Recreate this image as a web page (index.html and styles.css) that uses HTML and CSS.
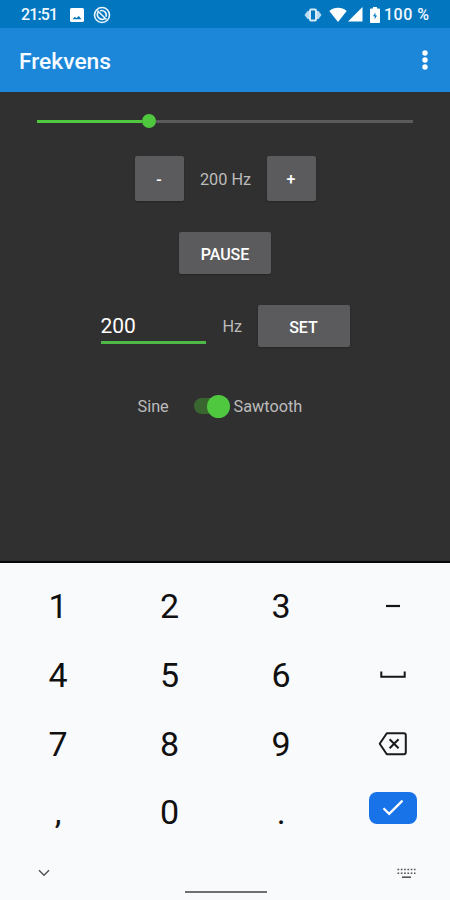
FILE: index.html
```html
<!DOCTYPE html>
<html lang="en">
<head>
<meta charset="utf-8">
<title>Frekvens</title>
<link rel="stylesheet" href="styles.css">
</head>
<body>
<div class="phone">
  <header class="status">
    <span class="clock">21:51</span>
    <svg class="i-photo" width="14" height="14" viewBox="0 0 14 14"><path fill="#fff" fill-rule="evenodd" d="M1.500 0h11A1.500 1.500 0 0 1 14 1.500v11a1.500 1.500 0 0 1-1.500 1.500h-11A1.500 1.500 0 0 1 0 12.500v-11A1.500 1.500 0 0 1 1.500 0zM2.500 11.300h9L8.800 7.900 6.700 10 4.700 9z"/></svg>
    <svg class="i-dnd" width="18" height="18" viewBox="0 0 18 18" fill="none" stroke="#e9f4fc"><circle cx="9" cy="9" r="7.500" stroke-width="1.600"/><path stroke-width="1.600" d="M5 6.200a4.800 4.800 0 0 0 7 6.200M7 4.800a4.700 4.700 0 0 1 6 6M4.300 4.500l9.200 9"/></svg>
    <span class="spacer"></span>
    <svg class="i-vib" width="18" height="14" viewBox="0 0 18 14" fill="none" stroke="#d5e9f7"><path fill="#b9dcf3" stroke="none" d="M.5 7L3.500 3H5v8H3.500zM17.500 7l-3-4H13v8h1.500z"/><rect x="6" y="1.500" width="6" height="11" rx="1" stroke-width="2"/></svg>
    <svg class="i-wifi" width="18" height="15" viewBox="0 0 18 15"><path fill="#fff" d="M9 15L.3 4C5.200-.2 12.800-.2 17.700 4z"/></svg>
    <svg class="i-cell" width="15" height="15" viewBox="0 0 15 15"><path fill="#fff" d="M0 14.500L14.500 0v14.500z"/></svg>
    <svg class="i-bat" width="10" height="16" viewBox="0 0 10 16"><path fill="#fff" fill-rule="evenodd" d="M3 0h4v1.500h2a1 1 0 0 1 1 1V15a1 1 0 0 1-1 1H1a1 1 0 0 1-1-1V2.500a1 1 0 0 1 1-1h2zM5.400 5.500L3 9.300h1.700v3L7.100 8.500H5.400z"/></svg>
    <span class="percent">100 %</span>
  </header>
  <div class="appbar">
    <h1>Frekvens</h1>
    <svg width="6" height="20" viewBox="0 0 6 20" fill="#fff"><circle cx="3" cy="3" r="2.700"/><circle cx="3" cy="10" r="2.700"/><circle cx="3" cy="17" r="2.700"/></svg>
  </div>
  <main>
    <div class="slider"><span class="fill"></span><span class="knob"></span><span class="rest"></span></div>
    <div class="stepper">
      <button class="btn small">-</button>
      <span class="label value">200 Hz</span>
      <button class="btn small">+</button>
    </div>
    <button class="btn wide pause">PAUSE</button>
    <div class="entry">
      <span class="field">200</span>
      <span class="label unit">Hz</span>
      <button class="btn wide">SET</button>
    </div>
    <div class="wave">
      <span class="label">Sine</span>
      <span class="switch"><span class="thumb"></span></span>
      <span class="label saw">Sawtooth</span>
    </div>
  </main>
  <section class="keyboard">
    <div class="keys">
      <span>1</span><span>2</span><span>3</span>
      <span><svg width="26" height="26" viewBox="0 0 26 26"><path stroke="#151515" stroke-width="2.200" d="M6 13h14"/></svg></span>
      <span>4</span><span>5</span><span>6</span>
      <span><svg width="26" height="26" viewBox="0 0 26 26"><path fill="none" stroke="#151515" stroke-width="2" d="M1.300 9.500v5.300h23.400V9.500"/></svg></span>
      <span>7</span><span>8</span><span>9</span>
      <span><svg width="30" height="26" viewBox="0 0 30 26" fill="none" stroke="#1b1b1b" stroke-width="2"><path stroke-linejoin="round" d="M8.800 2.300h17a2 2 0 0 1 2 2v16.900a2 2 0 0 1-2 2h-17L1.700 12.750z"/><path d="M11.600 8.200l9 9M20.600 8.200l-9 9"/></svg></span>
      <span>,</span><span>0</span><span>.</span>
      <span class="enter-cell"><span class="enter"><svg width="22" height="18" viewBox="0 0 22 18"><path fill="none" stroke="#fff" stroke-width="2.300" d="M1.500 9.300l5.700 5.600L20.500 1.600"/></svg></span></span>
    </div>
    <div class="nav">
      <svg width="12" height="8" viewBox="0 0 12 8"><path fill="none" stroke="#555" stroke-width="1.500" d="M1 1.300l5 5 5-5"/></svg>
      <span class="home"></span>
      <svg width="19" height="11" viewBox="0 0 19 11" fill="none" stroke="#555"><path stroke-width="1.600" stroke-dasharray="1.700 1.600" d="M.5 1.500h18M.5 5.300h18"/><path stroke-width="1.600" d="M5 9.200h9"/></svg>
    </div>
  </section>
</div>
</body>
</html>
```
FILE: styles.css
```css
* { box-sizing: border-box; }
body { margin: 0; font-family: Roboto, "Liberation Sans", sans-serif; }
svg { display: block; flex: none; }
.phone { width: 450px; height: 900px; display: flex; flex-direction: column; background: #303030; overflow: hidden; }
.status { height: 28px; flex: none; display: flex; align-items: center; padding: 1px 20px 0 21px; background: #0277bf; color: #f2f9ff; font-size: 16px; font-weight: 500; white-space: nowrap; }
.clock { width: 49px; letter-spacing: -0.900px; }
.i-dnd { margin-left: 9px; }
.spacer { flex: 1; }
.i-vib { margin-right: 7px; }
.i-wifi { margin-right: 1px; }
.i-bat { margin: 0 4px 0 7px; }
.percent { width: 46px; letter-spacing: 0.500px; }
.appbar { height: 64px; flex: none; display: flex; align-items: center; justify-content: space-between; padding: 0 22px 0 19px; background: #1c87d9; }
.appbar svg { margin-top: -1px; }
h1 { margin: 3px 0 0; color: #f5fbff; font-size: 22.800px; font-weight: 500; line-height: 28px; }
main { height: 469px; flex: none; display: flex; flex-direction: column; align-items: center; }
.slider { width: 376px; height: 16px; margin-top: 21px; display: flex; align-items: center; }
.fill { width: 105px; height: 3px; background: #4fc840; }
.knob { width: 14px; height: 14px; border-radius: 50%; background: #4fc840; }
.rest { flex: 1; height: 3px; background: #5b5b5b; }
.stepper { width: 181px; height: 45px; margin-top: 27px; display: flex; align-items: center; justify-content: space-between; }
.btn { margin: 0; padding: 0; border: 0; border-radius: 2px; background: #5b5b5d; color: #fff; font: 500 16px Roboto, "Liberation Sans", sans-serif; box-shadow: 0 1px 2px rgba(0,0,0,.25); }
.small { width: 49px; height: 45px; padding-top: 1px; }
.wide { width: 92px; height: 42px; padding-top: 2px; }
.pause { margin-top: 31px; }
.label { padding: 2px 0 0 1px; color: #bcbcbc; font-size: 16.300px; line-height: 20px; white-space: nowrap; }
.entry { width: 249px; height: 42px; margin-top: 31px; display: flex; align-items: center; }
.field { width: 105px; height: 36px; padding-top: 5px; border-bottom: 3px solid #4fb947; color: #fff; font-size: 21px; line-height: 26px; }
.unit { width: 36px; margin: 0 0 0 16px; }
.wave { width: 178px; height: 24px; margin: 47px 0 0 1px; display: flex; align-items: center; }
.wave .label { width: 57px; }
.switch { width: 36px; height: 16px; border-radius: 8px; display: flex; align-items: center; justify-content: flex-end; background: linear-gradient(90deg, #39662f 28px, transparent 28px); }
.thumb { width: 23px; height: 23px; border-radius: 50%; background: #4fc840; flex: none; }
.wave .saw { margin-left: 3px; width: auto; }
.keyboard { flex: 1; display: flex; flex-direction: column; border-top: 2px solid #080808; background: #f9fafc; }
.keys { display: grid; grid-template-columns: repeat(4, 111.500px); grid-template-rows: repeat(4, 68.700px); margin: 9px 0 0 2.400px; }
.keys > span { display: flex; align-items: center; justify-content: center; color: #101010; font-size: 34px; font-weight: 400; }
.keys > .enter-cell { padding-bottom: 9px; }
.enter { width: 48px; height: 32px; border-radius: 8px; background: #1872e8; display: flex; align-items: center; justify-content: center; }
.nav { flex: 1; display: grid; grid-template-columns: 1fr 82px 1fr; padding: 22px 35px 0 38px; }
.nav svg:last-child { justify-self: end; margin: -1px -1px 0 0; }
.home { height: 2px; margin-top: 22px; margin-left: -1px; margin-right: 1px; background: #707070; }
```
